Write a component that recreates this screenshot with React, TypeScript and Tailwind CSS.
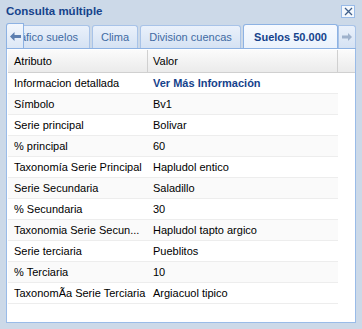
import React from "react"

const rows = [
  { attr: "Informacion detallada", value: "Ver Más Información", link: true },
  { attr: "Símbolo", value: "Bv1" },
  { attr: "Serie principal", value: "Bolivar" },
  { attr: "% principal", value: "60" },
  { attr: "Taxonomía Serie Principal", value: "Hapludol entico" },
  { attr: "Serie Secundaria", value: "Saladillo" },
  { attr: "% Secundaria", value: "30" },
  { attr: "Taxonomia Serie Secun...", value: "Hapludol tapto argico" },
  { attr: "Serie terciaria", value: "Pueblitos" },
  { attr: "% Terciaria", value: "10" },
  { attr: "TaxonomÃa Serie Terciaria", value: "Argiacuol tipico" },
]

const tabs = [
  { label: "Gráfico suelos", w: "w-[91px] justify-end pr-[11px]" },
  { label: "Clima", w: "w-[46px] justify-center" },
  { label: "Division cuencas", w: "w-[101px] justify-center" },
  { label: "Suelos 50.000", w: "w-[95px] justify-center", active: true },
]

export default function App() {
  return (
    <div className="w-[362px] h-[329px] bg-[#ccd9e8] flex flex-col px-[6px] pb-[6px] font-['Liberation_Sans',Arial,sans-serif] text-[11px] text-black">
      {/* Header */}
      <div className="h-[24px] flex items-center justify-between">
        <span className="font-bold text-[#15428b] text-[11.5px]">Consulta múltiple</span>
        <div className="w-[14px] h-[13px] mr-[1px] mb-[2px] border border-[#99bbe8] bg-[#f4f8fd] flex items-center justify-center">
          <svg width="9" height="9" viewBox="0 0 9 9">
            <path d="M1 1 L8 8 M8 1 L1 8" stroke="#3f5f8a" strokeWidth="1.3" />
          </svg>
        </div>
      </div>

      {/* Tab strip */}
      <div className="h-[25px] flex items-end border-b border-[#8db2e3]">
        <div className="w-[18px] h-[25px] shrink-0 border border-b-0 border-[#8db2e3] rounded-tl-[3px] bg-gradient-to-b from-[#f3f7fd] to-[#dde8f6] flex items-center justify-center">
          <svg width="11" height="9" viewBox="0 0 11 9">
            <path d="M0 4.5 L4.5 0 L4.5 3 L11 3 L11 6 L4.5 6 L4.5 9 Z" fill="#5d7fb0" />
          </svg>
        </div>
        <div className="flex-1 h-[25px] overflow-hidden">
          <div className="flex items-end gap-[2px] h-full ml-[-25px]">
            {tabs.map((t) =>
              t.active ? (
                <div
                  key={t.label}
                  className={`${t.w} h-[25px] shrink-0 border border-b-0 border-[#8db2e3] rounded-t-[3px] bg-gradient-to-b from-[#f7faff] to-[#eaf2fc] flex items-center font-bold text-[#15428b] mb-[-1px]`}
                >
                  {t.label}
                </div>
              ) : (
                <div
                  key={t.label}
                  className={`${t.w} h-[23px] shrink-0 border border-b-0 border-[#a8c3e8] rounded-t-[3px] bg-gradient-to-b from-[#eaf1fb] to-[#d5e2f3] flex items-center whitespace-nowrap text-[#416aa3]`}
                >
                  {t.label}
                </div>
              )
            )}
          </div>
        </div>
        <div className="w-[18px] h-[23px] shrink-0 border border-b-0 border-[#a8c3e8] rounded-tr-[3px] bg-gradient-to-b from-[#eaf1fb] to-[#d5e2f3] flex items-center justify-center">
          <svg width="10" height="8" viewBox="0 0 10 8">
            <path d="M10 4 L6 0 L6 2.5 L0 2.5 L0 5.5 L6 5.5 L6 8 Z" fill="#9fb2cc" />
          </svg>
        </div>
      </div>

      {/* Body */}
      <div className="flex-1 border border-t-0 border-[#99bbe8] bg-white pl-[1px] pt-[1px]">
        <div className="flex h-[23px] bg-gradient-to-b from-[#fbfbfb] to-[#ebebeb] border-b border-[#d0d0d0]">
          <div className="w-[140px] pl-[6px] flex items-center border-r border-[#d0d0d0]">Atributo</div>
          <div className="w-[190px] pl-[5px] flex items-center border-r border-[#d0d0d0]">Valor</div>
          <div className="flex-1" />
        </div>
        <div className="w-[330px]">
          {rows.map((r, i) => (
            <div
              key={r.attr}
              className={`flex h-[21px] items-center border-b border-[#ededed] ${i % 2 === 1 ? "bg-[#fafafa]" : "bg-white"}`}
            >
              <div className="w-[140px] pl-[6px] whitespace-nowrap overflow-hidden">{r.attr}</div>
              <div className={`w-[190px] pl-[5px] whitespace-nowrap ${r.link ? "font-bold text-[#15428b]" : ""}`}>{r.value}</div>
            </div>
          ))}
        </div>
      </div>
    </div>
  )
}
